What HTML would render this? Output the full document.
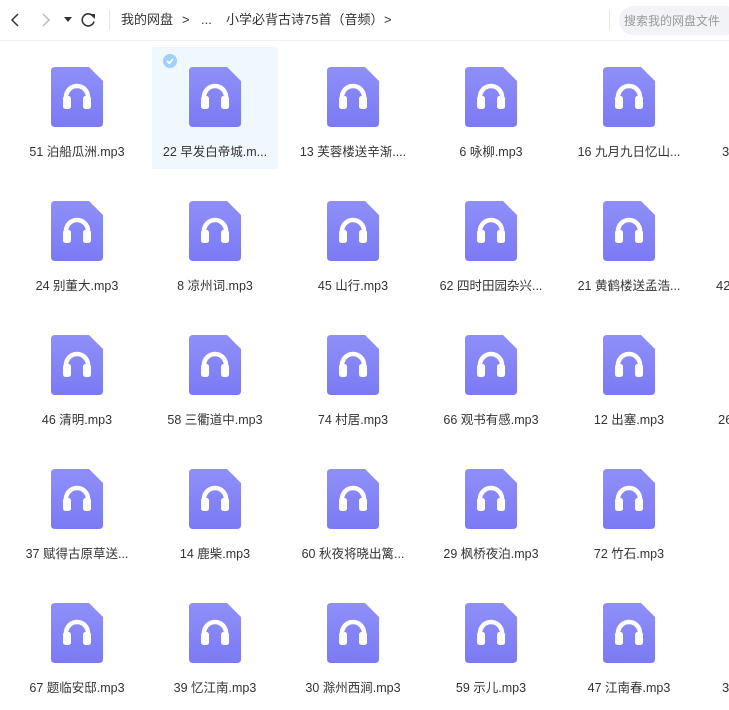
<!DOCTYPE html>
<html><head><meta charset="utf-8"><style>
*{margin:0;padding:0;box-sizing:border-box}
body{width:729px;height:710px;overflow:hidden;background:#fff;font-family:"Liberation Sans","Noto Sans CJK SC",sans-serif;position:relative;color:#333}
.top{position:absolute;left:0;top:0;width:729px;height:41px;border-bottom:1px solid #eef0f3;background:#fff}
.t{position:absolute;font-size:13px;color:#333;top:11px;white-space:nowrap;line-height:18px}
.search{position:absolute;left:619px;top:6px;width:120px;height:29px;border-radius:15px;background:#f2f3f7;font-size:12px;color:#999;padding:6px 0 0 5px;white-space:nowrap}
.cell{position:absolute;width:126px;height:122px}
.cell > svg{position:absolute;left:37px;top:20px}
.lbl{position:absolute;left:0;top:97px;width:126px;text-align:center;font-size:12.5px;color:#333;white-space:nowrap;line-height:16px}
.sel{background:#eff7ff}
.chk{position:absolute;left:11px;top:7px;width:14px;height:14px;border-radius:50%;background:#9fd0f8}
.chk svg{display:block}
</style></head><body>
<svg width="0" height="0" style="position:absolute"><defs>
<linearGradient id="g" x1="0" y1="0" x2="0" y2="1"><stop offset="0" stop-color="#8f8ff9"/><stop offset="1" stop-color="#7b7af4"/></linearGradient>
<symbol id="ic" viewBox="0 0 52 60"><path d="M4 0H38L52 14V56Q52 60 48 60H4Q0 60 0 56V4Q0 0 4 0Z" fill="url(#g)"/>
<path d="M15 34V30A11 11 0 0 1 37 30V34" fill="none" stroke="#fff" stroke-width="4.5"/>
<rect x="12" y="29" width="8" height="13" rx="2.5" fill="#fff"/><rect x="32" y="29" width="8" height="13" rx="2.5" fill="#fff"/></symbol></defs></svg>
<div class="top">
<svg style="position:absolute;left:9px;top:13px" width="12" height="14"><path d="M9 1L3 7L9 13" fill="none" stroke="#333" stroke-width="1.5"/></svg>
<svg style="position:absolute;left:40px;top:13px" width="12" height="14"><path d="M3 1L9 7L3 13" fill="none" stroke="#bbb" stroke-width="1.5"/></svg>
<svg style="position:absolute;left:64px;top:17px" width="8" height="6"><path d="M0 0H8L4 5Z" fill="#333"/></svg>
<svg style="position:absolute;left:81px;top:12px" width="16" height="16"><path d="M12.5 5A6 6 0 1 0 13 9.5" fill="none" stroke="#333" stroke-width="1.6"/><path d="M9 2L14 2L14 7Z" fill="#333"/></svg>
<div style="position:absolute;left:109px;top:10px;width:1px;height:20px;background:#e5e5e5"></div>
<span class="t" style="left:121px">我的网盘</span>
<span class="t" style="left:182px">&gt;</span>
<span class="t" style="left:201px">...</span>
<span class="t" style="left:226px">小学必背古诗75首（音频）</span>
<span class="t" style="left:384px">&gt;</span>
<div style="position:absolute;left:609px;top:10px;width:1px;height:20px;background:#e5e5e5"></div>
<div class="search">搜索我的网盘文件</div>
</div>
<div class="cell" style="left:14px;top:47px"><svg width="52" height="60"><use href="#ic"/></svg><div class="lbl">51 泊船瓜洲.mp3</div></div>
<div class="cell sel" style="left:152px;top:47px"><div class="chk"><svg width="14" height="14"><path d="M4 7L6.3 9.3L10 5" fill="none" stroke="#fff" stroke-width="1.6"/></svg></div><svg width="52" height="60"><use href="#ic"/></svg><div class="lbl">22 早发白帝城.m...</div></div>
<div class="cell" style="left:290px;top:47px"><svg width="52" height="60"><use href="#ic"/></svg><div class="lbl">13 芙蓉楼送辛渐....</div></div>
<div class="cell" style="left:428px;top:47px"><svg width="52" height="60"><use href="#ic"/></svg><div class="lbl">6 咏柳.mp3</div></div>
<div class="cell" style="left:566px;top:47px"><svg width="52" height="60"><use href="#ic"/></svg><div class="lbl">16 九月九日忆山...</div></div>
<span class="t" style="left:722px;top:143px">3</span>

<div class="cell" style="left:14px;top:181px"><svg width="52" height="60"><use href="#ic"/></svg><div class="lbl">24 别董大.mp3</div></div>
<div class="cell" style="left:152px;top:181px"><svg width="52" height="60"><use href="#ic"/></svg><div class="lbl">8 凉州词.mp3</div></div>
<div class="cell" style="left:290px;top:181px"><svg width="52" height="60"><use href="#ic"/></svg><div class="lbl">45 山行.mp3</div></div>
<div class="cell" style="left:428px;top:181px"><svg width="52" height="60"><use href="#ic"/></svg><div class="lbl">62 四时田园杂兴...</div></div>
<div class="cell" style="left:566px;top:181px"><svg width="52" height="60"><use href="#ic"/></svg><div class="lbl">21 黄鹤楼送孟浩...</div></div>
<span class="t" style="left:716px;top:277px">42</span>

<div class="cell" style="left:14px;top:315px"><svg width="52" height="60"><use href="#ic"/></svg><div class="lbl">46 清明.mp3</div></div>
<div class="cell" style="left:152px;top:315px"><svg width="52" height="60"><use href="#ic"/></svg><div class="lbl">58 三衢道中.mp3</div></div>
<div class="cell" style="left:290px;top:315px"><svg width="52" height="60"><use href="#ic"/></svg><div class="lbl">74 村居.mp3</div></div>
<div class="cell" style="left:428px;top:315px"><svg width="52" height="60"><use href="#ic"/></svg><div class="lbl">66 观书有感.mp3</div></div>
<div class="cell" style="left:566px;top:315px"><svg width="52" height="60"><use href="#ic"/></svg><div class="lbl">12 出塞.mp3</div></div>
<span class="t" style="left:718px;top:411px">26</span>

<div class="cell" style="left:14px;top:449px"><svg width="52" height="60"><use href="#ic"/></svg><div class="lbl">37 赋得古原草送...</div></div>
<div class="cell" style="left:152px;top:449px"><svg width="52" height="60"><use href="#ic"/></svg><div class="lbl">14 鹿柴.mp3</div></div>
<div class="cell" style="left:290px;top:449px"><svg width="52" height="60"><use href="#ic"/></svg><div class="lbl">60 秋夜将晓出篱...</div></div>
<div class="cell" style="left:428px;top:449px"><svg width="52" height="60"><use href="#ic"/></svg><div class="lbl">29 枫桥夜泊.mp3</div></div>
<div class="cell" style="left:566px;top:449px"><svg width="52" height="60"><use href="#ic"/></svg><div class="lbl">72 竹石.mp3</div></div>

<div class="cell" style="left:14px;top:583px"><svg width="52" height="60"><use href="#ic"/></svg><div class="lbl">67 题临安邸.mp3</div></div>
<div class="cell" style="left:152px;top:583px"><svg width="52" height="60"><use href="#ic"/></svg><div class="lbl">39 忆江南.mp3</div></div>
<div class="cell" style="left:290px;top:583px"><svg width="52" height="60"><use href="#ic"/></svg><div class="lbl">30 滁州西涧.mp3</div></div>
<div class="cell" style="left:428px;top:583px"><svg width="52" height="60"><use href="#ic"/></svg><div class="lbl">59 示儿.mp3</div></div>
<div class="cell" style="left:566px;top:583px"><svg width="52" height="60"><use href="#ic"/></svg><div class="lbl">47 江南春.mp3</div></div>
<span class="t" style="left:722px;top:679px">3</span>
</body></html>
